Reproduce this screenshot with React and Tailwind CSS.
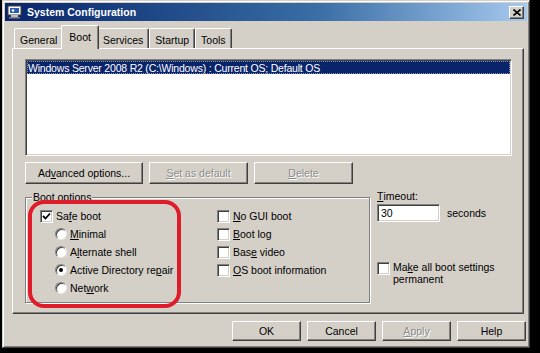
import React from 'react'

const raised = 'border border-t-white border-l-white border-r-[#404040] border-b-[#404040] shadow-[inset_-1px_-1px_#808080]'
const sunken = 'border border-t-[#808080] border-l-[#808080] border-r-white border-b-white shadow-[inset_1px_1px_#404040,inset_-1px_-1px_#d4d0c8]'

function U({ children }) {
    return <span className="underline underline-offset-[1px]">{children}</span>
}

function Btn({ children, w, disabled }) {
    return (
        <div className={`${raised} ${w} h-full flex items-center justify-center bg-[#d4d0c8] ${disabled ? 'text-[#8c8c8c] [text-shadow:1px_1px_0_#fff]' : 'text-black'}`}>
            {children}
        </div>
    )
}

function Check({ checked }) {
    return (
        <div className={`${sunken} w-[13px] h-[13px] bg-white shrink-0 flex items-center justify-center`}>
            {checked && (
                <svg width="9" height="9" viewBox="0 0 9 9">
                    <path d="M1 4 L3.5 6.5 L8 1.5" stroke="#000" strokeWidth="1.8" fill="none" />
                </svg>
            )}
        </div>
    )
}

function Radio({ checked }) {
    return (
        <div className="w-[12px] h-[12px] rounded-full bg-white shrink-0 flex items-center justify-center border border-t-[#808080] border-l-[#808080] border-r-[#e8e8e8] border-b-[#e8e8e8] shadow-[inset_1px_1px_#404040]">
            {checked && <div className="w-[4px] h-[4px] rounded-full bg-black" />}
        </div>
    )
}

function CheckRow({ label, checked }) {
    return (
        <div className="h-[18px] flex items-center gap-[3px]">
            <Check checked={checked} />
            <span>{label}</span>
        </div>
    )
}

function RadioRow({ label, checked }) {
    return (
        <div className="h-[18px] flex items-center gap-[3px] pl-[15px]">
            <Radio checked={checked} />
            <span>{label}</span>
        </div>
    )
}

function Tab({ label, active }) {
    if (active) {
        return (
            <div className="relative z-10 -mx-[2px] -mb-px h-[24px] px-[7px] flex items-start pt-[5px] bg-[#d4d0c8] border-t border-l border-t-white border-l-white border-r border-r-[#404040] shadow-[inset_-1px_0_#808080] rounded-tl-[2px] rounded-tr-[2px]">
                {label}
            </div>
        )
    }
    return (
        <div className="h-[20px] px-[5px] flex items-start pt-[5px] border-t border-l border-t-white border-l-white border-r border-r-[#404040] shadow-[inset_-1px_0_#808080] rounded-tl-[2px] rounded-tr-[2px]">
            {label}
        </div>
    )
}

export default function App() {
    return (
        <div className="relative w-[540px] h-[353px] bg-black pl-[2px] pt-[0px] overflow-hidden text-[10.5px] leading-[12px] text-black" style={{ fontFamily: '"Liberation Sans", Arial, sans-serif' }}>
            <div className="w-[528px] h-[348px] bg-[#d4d0c8] border border-t-[#d4d0c8] border-l-[#d4d0c8] border-r-[#404040] border-b-[#404040] shadow-[inset_1px_1px_#fff,inset_-1px_-1px_#808080] p-[2px] flex flex-col">
                {/* Title bar */}
                <div className="h-[18px] flex items-center bg-linear-to-r from-[#0a246a] via-[#3a6ea5] via-60% to-[#a6caf0] pl-[2px] pr-[2px]">
                    <svg width="16" height="14" viewBox="0 0 16 14" className="shrink-0">
                        <rect x="1" y="1" width="13" height="9" fill="#fff" stroke="#404040" />
                        <rect x="3" y="3" width="9" height="5" fill="#2a5db0" />
                        <rect x="4" y="10" width="7" height="2" fill="#c0c0c0" />
                        <rect x="2" y="12" width="11" height="1.5" fill="#808080" />
                        <circle cx="6" cy="5.5" r="1.3" fill="#fff" />
                    </svg>
                    <span className="ml-[4px] text-white font-bold text-[10.5px]">System Configuration</span>
                    <div className={`${raised} ml-auto mr-[1px] w-[15px] h-[13px] bg-[#d4d0c8] flex items-center justify-center`}>
                        <svg width="8" height="7" viewBox="0 0 8 7">
                            <path d="M0.5 0.5 L7.5 6.5 M7.5 0.5 L0.5 6.5" stroke="#000" strokeWidth="1.6" />
                        </svg>
                    </div>
                </div>

                {/* Tabs */}
                <div className="mt-[3px] ml-[8px] pl-[1px] h-[24px] flex items-end">
                    <Tab label="General" />
                    <Tab label="Boot" active />
                    <Tab label="Services" />
                    <Tab label="Startup" />
                    <Tab label="Tools" />
                </div>

                {/* Panel */}
                <div className="ml-[7px] mr-[3px] h-[266px] border border-t-white border-l-white border-r-[#404040] border-b-[#404040] shadow-[inset_-1px_-1px_#808080] pt-[10px] pl-[12px] pr-[11px] flex flex-col">
                    <div className={`${sunken} h-[97px] bg-white p-[1px]`}>
                        <div className="h-[13px] bg-[#0a246a] text-white flex items-center pl-[1px] tracking-[-0.2px] outline outline-dotted outline-[#8090c0] -outline-offset-1">
                            Windows Server 2008 R2 (C:\Windows) : Current OS; Default OS
                        </div>
                    </div>

                    <div className="mt-[6px] h-[22px] flex gap-[6px]">
                        <Btn w="w-[118px]">Ad<U>v</U>anced options...</Btn>
                        <Btn w="w-[99px]" disabled><U>S</U>et as default</Btn>
                        <Btn w="w-[99px]" disabled><U>D</U>elete</Btn>
                    </div>

                    <div className="mt-[13px] flex">
                        {/* Boot options group */}
                        <div className="relative w-[345px] h-[106px] border border-[#808080] shadow-[inset_1px_1px_#fff,1px_1px_#fff] pt-[9px] pl-[14px] grid grid-cols-[177px_1fr]">
                            <span className="absolute -top-[7px] left-[6px] bg-[#d4d0c8] px-[1px]">Boot options</span>
                            <div className="flex flex-col">
                                <CheckRow checked label={<>Sa<U>f</U>e boot</>} />
                                <RadioRow label={<><U>M</U>inimal</>} />
                                <RadioRow label={<>A<U>l</U>ternate shell</>} />
                                <RadioRow checked label={<>Active Directory re<U>p</U>air</>} />
                                <RadioRow label={<>Net<U>w</U>ork</>} />
                            </div>
                            <div className="flex flex-col">
                                <CheckRow label={<><U>N</U>o GUI boot</>} />
                                <CheckRow label={<><U>B</U>oot log</>} />
                                <CheckRow label={<>Bas<U>e</U> video</>} />
                                <CheckRow label={<><U>O</U>S boot information</>} />
                            </div>
                        </div>

                        {/* Timeout */}
                        <div className="ml-[7px] -mt-[8px] flex flex-col">
                            <div className="h-[14px] flex items-center"><U>T</U>imeout:</div>
                            <div className="mt-[1px] flex items-center">
                                <div className={`${sunken} w-[63px] h-[18px] bg-white flex items-center pl-[3px]`}>30</div>
                                <span className="ml-[7px]">seconds</span>
                            </div>
                            <div className="mt-[40px] flex items-start gap-[3px]">
                                <Check />
                                <span className="leading-[12px] -mt-[1px]">Ma<U>k</U>e all boot settings<br />permanent</span>
                            </div>
                        </div>
                    </div>
                </div>

                {/* Bottom buttons */}
                <div className="mt-[7px] h-[20px] flex justify-end gap-[6px] pr-[1px]">
                    <Btn w="w-[69px]">OK</Btn>
                    <Btn w="w-[69px]">Cancel</Btn>
                    <Btn w="w-[69px]" disabled><U>A</U>pply</Btn>
                    <Btn w="w-[69px]">Help</Btn>
                </div>
            </div>

            {/* red annotation */}
            <div className="absolute left-[28px] top-[200px] w-[153px] h-[108px] border-[4px] border-[#e01b2a] rounded-[16px] pointer-events-none" />
        </div>
    )
}
